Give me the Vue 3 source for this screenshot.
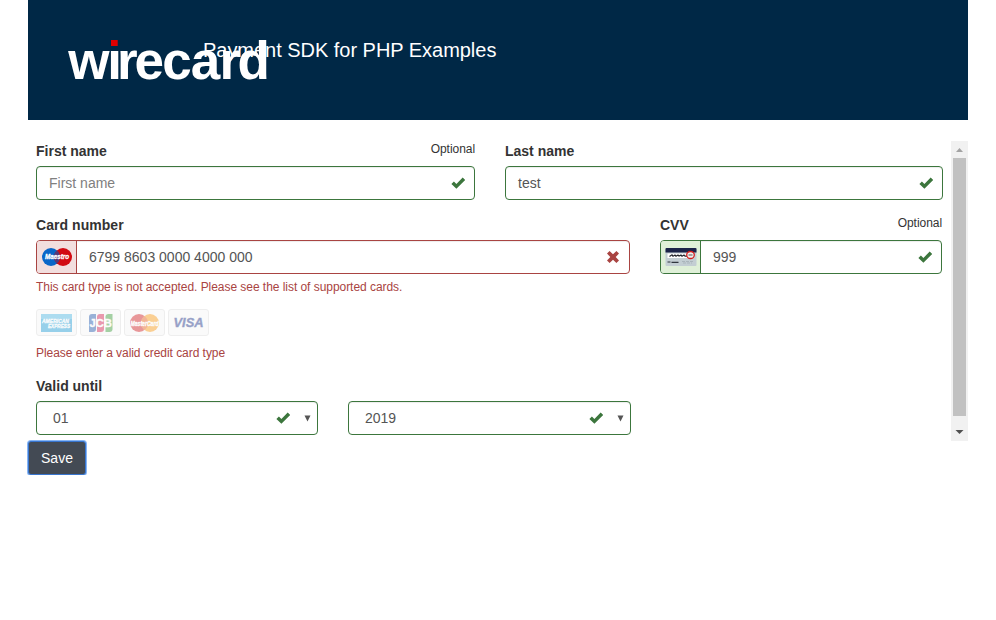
<script setup>
const check = 'M0.4 8.1 L2.9 5.5 L5.4 7.9 L11.7 1.6 L14.2 4.1 L5.4 12.8 Z'
const cards = ['amex', 'jcb', 'mastercard', 'visa']
</script>

<template>
  <main class="page">
    <header class="banner">
      <h1>Payment SDK for PHP Examples</h1>
      <svg class="logo" width="210" height="50" viewBox="0 0 210 50">
        <text x="0.3 39.3 49.1 66.6 94.2 122.8 151.4 169.5" y="42.9">wirecard</text>
        <rect class="mask" x="40" y="0" width="12" height="12.5" />
        <rect class="dot" x="43" y="4" width="6.7" height="6" />
      </svg>
    </header>

    <div class="frame">
      <form class="form">
        <div class="row names">
          <div class="field">
            <div class="label"><b>First name</b><small>Optional</small></div>
            <div class="control">
              <span class="value placeholder">First name</span>
              <svg class="mark" width="15" height="14" viewBox="0 0 15 14"><path :d="check" /></svg>
            </div>
          </div>
          <div class="field">
            <div class="label"><b>Last name</b></div>
            <div class="control">
              <span class="value">test</span>
              <svg class="mark" width="15" height="14" viewBox="0 0 15 14"><path :d="check" /></svg>
            </div>
          </div>
        </div>

        <div class="row card">
          <div class="field">
            <div class="label"><b class="wide">Card number</b></div>
            <div class="control error">
              <span class="addon">
                <svg width="32" height="20" viewBox="0 0 32 20">
                  <circle cx="10" cy="10" r="9" fill="#0a66c8" />
                  <circle cx="22" cy="10" r="9" fill="#d20a12" />
                  <path d="M16 3.3 A9 9 0 0 1 16 16.7 A9 9 0 0 1 16 3.3" fill="#533a78" />
                  <text x="4" y="12.4" textLength="24" lengthAdjust="spacingAndGlyphs" class="brand" font-size="6.8" fill="#fff" stroke="#fff" stroke-width=".3">Maestro</text>
                </svg>
              </span>
              <span class="value">6799 8603 0000 4000 000</span>
              <svg class="mark cross" width="14" height="14" viewBox="0 0 14 14">
                <path d="M3.6 1 L7 4.3 L10.4 1 L13 3.6 L9.7 7 L13 10.4 L10.4 13 L7 9.7 L3.6 13 L1 10.4 L4.3 7 L1 3.6 Z" />
              </svg>
            </div>
            <p class="help">This card type is not accepted. Please see the list of supported cards.</p>
          </div>
          <div class="field">
            <div class="label"><b>CVV</b><small>Optional</small></div>
            <div class="control">
              <span class="addon">
                <svg width="32" height="20" viewBox="0 0 32 20">
                  <rect x="0.5" y="1" width="31" height="18" rx="1" fill="#c3ced3" />
                  <path d="M.5 3V2Q.5 1 1.5 1H30.5Q31.5 1 31.5 2V5.5H.5Z" fill="#1b2348" />
                  <rect x="2.5" y="6.5" width="22" height="4.5" fill="#fff" />
                  <path d="M4.5 9.5l2.5-1.7 1 1.5 2-1.2 1 1.2 2-1.2 1 1 2-1 1 1.2 2-1.2 1 1h2" fill="none" stroke="#22252c" stroke-width="1.2" />
                  <path d="M2.5 15h3M6.5 15.3h7" stroke="#30363f" stroke-width="1.2" />
                  <path d="M17 14.5h11M18 16h9" stroke="#aab5bb" stroke-dasharray="3 1" />
                  <ellipse cx="25.5" cy="8" rx="3.8" ry="3.5" fill="#eee" stroke="#d51d1b" stroke-width="1.3" />
                  <path d="M23.5 8h4" stroke="#555" />
                </svg>
              </span>
              <span class="value">999</span>
              <svg class="mark" width="15" height="14" viewBox="0 0 15 14"><path :d="check" /></svg>
            </div>
          </div>
        </div>

        <div class="brands">
          <span v-for="card in cards" :key="card" class="chip">
            <svg width="33" height="20" viewBox="0 0 33 20">
              <g v-if="card === 'amex'">
                <rect x="1" y="1" width="31" height="18" fill="#209fd8" />
                <rect x="1" y="1" width="31" height="5" fill="#50b8e4" />
                <text x="2" y="10" textLength="27" lengthAdjust="spacingAndGlyphs" class="brand" font-size="6" fill="#fff" stroke="#fff" stroke-width=".3">AMERICAN</text>
                <text x="8" y="15.4" textLength="22" lengthAdjust="spacingAndGlyphs" class="brand" font-size="6" fill="#fff" stroke="#fff" stroke-width=".3">EXPRESS</text>
              </g>
              <g v-else-if="card === 'jcb'">
                <path d="M12 1h-4q-3 0-3 3v15h4q3 0 3-3z" fill="#2559ad" />
                <path d="M20 1h-4q-3 0-3 3v15h4q3 0 3-3z" fill="#d52453" />
                <path d="M28.5 1h-4q-3 0-3 3v15h4q3 0 3-3z" fill="#3d9e3d" />
                <text x="5.5" y="13.8" textLength="22.5" lengthAdjust="spacingAndGlyphs" class="brand upright" font-size="10" fill="#fff" stroke="#fff" stroke-width=".3">JCB</text>
              </g>
              <g v-else-if="card === 'mastercard'">
                <circle cx="11" cy="10" r="9" fill="#d42025" />
                <circle cx="22" cy="10" r="9" fill="#fa9c18" />
                <path d="M16.5 2.9A9 9 0 0 1 16.5 17.1A9 9 0 0 1 16.5 2.9" fill="#e96222" />
                <text x="2.5" y="12.5" textLength="28" lengthAdjust="spacingAndGlyphs" class="brand" font-size="6.8" fill="#fff" stroke="#fff" stroke-width=".4">MasterCard</text>
              </g>
              <text v-else x="1.5" y="14.4" textLength="30" lengthAdjust="spacingAndGlyphs" class="brand" font-size="13.5" fill="#20348a" stroke="#20348a" stroke-width=".4">VISA</text>
            </svg>
          </span>
        </div>
        <p class="help brand-help">Please enter a valid credit card type</p>

        <div class="label expiry"><b>Valid until</b></div>
        <div class="row dates">
          <div v-for="option in ['01', '2019']" :key="option" class="control select">
            <span class="value">{{ option }}</span>
            <svg class="mark" width="15" height="14" viewBox="0 0 15 14"><path :d="check" /></svg>
            <svg class="arrow" width="7" height="7" viewBox="0 0 7 7"><path d="M.5.5h6L3.5 6.5z" /></svg>
          </div>
        </div>
      </form>

      <div class="scrollbar">
        <svg width="17" height="17" viewBox="0 0 17 17"><path d="M5 11h7L8.5 7z" fill="#a3a3a3" /></svg>
        <div class="thumb"></div>
        <svg class="down" width="17" height="17" viewBox="0 0 17 17"><path d="M4.5 6h8L8.5 10z" fill="#505050" /></svg>
      </div>
    </div>
    <button class="save" type="button">Save</button>
  </main>
</template>

<style>
body { background: #fff; }
</style>

<style scoped>
* { box-sizing: border-box; }
svg { display: block; flex: none; overflow: visible; }
.page {
  width: 940px;
  margin-left: 28px;
  font: 14px/20px "Liberation Sans", Arial, sans-serif;
  color: #333;
}
.banner {
  position: relative;
  height: 120px;
  padding: 38px 0 0 175px;
  background: #002846;
}
h1 { margin: 0; font-size: 20px; line-height: 24px; font-weight: 400; letter-spacing: -.03px; color: #fff; }
.logo { position: absolute; left: 40px; top: 36px; }
.logo text {
  font: 700 53px "Liberation Sans", Arial, sans-serif;
  fill: #fff;
}
.mask { fill: #002846; }
.dot { fill: #e10000; }
.frame { display: flex; height: 300px; margin-top: 21px; }
.form { width: 923px; padding-left: 8px; }
.row { display: grid; column-gap: 30px; }
.names { grid-template-columns: 439px 438px; height: 74px; }
.card { grid-template-columns: 594px 282px; height: 94px; }
.dates { grid-template-columns: 282px 283px; }
.label { display: flex; justify-content: space-between; height: 25px; }
.label small { font-size: 12px; line-height: 16px; letter-spacing: -.05px; }
.wide { letter-spacing: .05px; }
.control {
  display: flex;
  align-items: center;
  height: 34px;
  padding-right: 8px;
  overflow: hidden;
  border: 1px solid #3c763d;
  border-radius: 4px;
  background: #fff;
  box-shadow: inset 0 1px 1px rgba(0, 0, 0, .075);
}
.value { flex: 1; padding-left: 12px; color: #555; }
.placeholder { color: #808080; }
.mark { fill: #3c763d; }
.error { padding-right: 9px; border-color: #a94442; }
.cross { fill: #a94442; }
.addon {
  display: flex;
  align-items: center;
  justify-content: center;
  width: 40px;
  height: 32px;
  border-right: 1px solid #3c763d;
  background: #dff0d8;
}
.error .addon { border-color: #a94442; background: #f2dede; }
.help { margin: 0; font-size: 12px; line-height: 20px; letter-spacing: -.045px; color: #a94442; }
.card .help { margin-top: 3px; }
.brands { display: flex; gap: 3px; height: 27px; }
.chip {
  display: flex;
  align-items: center;
  justify-content: center;
  width: 41px;
  height: 27px;
  border: 1px solid #eee;
  border-radius: 3px;
  background: #fafafa;
}
.chip svg { opacity: .45; }
.brand { font-family: "Liberation Sans", Arial, sans-serif; font-weight: 700; font-style: italic; }
.upright { font-style: normal; }
.brand-help { margin-top: 7px; }
.expiry { margin-top: 13px; }
.select { padding-right: 6px; gap: 13px; }
.select .value { padding-left: 16px; }
.arrow { fill: #555; }
.scrollbar { display: flex; flex-direction: column; width: 17px; background: #f1f1f1; }
.thumb { width: 13px; height: 258px; margin-left: 2px; background: #c1c1c1; }
.down { margin-top: auto; }
.save {
  display: block;
  width: 58px;
  height: 34px;
  padding: 0;
  border: 1px solid #3875ce;
  border-radius: 3px;
  background: #434a54;
  box-shadow: 0 0 0 1px #86b5f5;
  color: #fff;
  font: 14px/20px "Liberation Sans", Arial, sans-serif;
}
</style>
